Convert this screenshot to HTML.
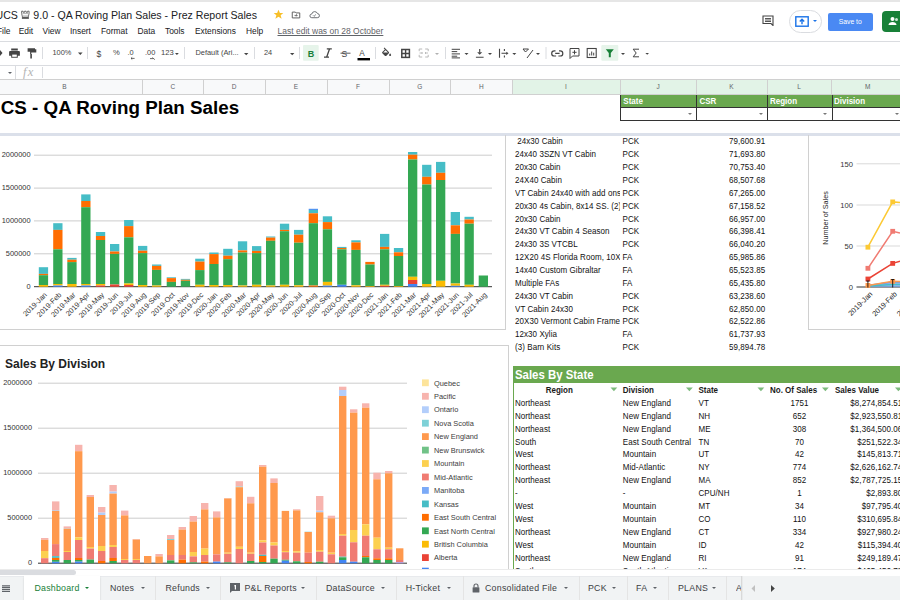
<!DOCTYPE html>
<html><head><meta charset="utf-8">
<style>
*{margin:0;padding:0;box-sizing:border-box}
html,body{width:900px;height:600px;overflow:hidden;background:#fff;font-family:"Liberation Sans",sans-serif;color:#202124}
.a{position:absolute;white-space:nowrap}
.c{position:absolute;white-space:nowrap;font-size:8px;letter-spacing:0.06px;line-height:12px;color:#111;transform:scaleY(1.2);transform-origin:0 6px}
.sy{transform:scaleY(1.2);transform-origin:0 6px}
.hl{position:absolute;background:#e2e3e3}
.col{position:absolute;top:79px;height:15.5px;font-size:6.5px;line-height:15px;text-align:center;color:#5f6368;border-right:1px solid #d0d0d0}
.tab{position:absolute;top:576px;height:24px;font-size:8.8px;letter-spacing:0.25px;line-height:24px;color:#3c4043}
.sep{position:absolute;top:576px;height:24px;width:1px;background:#e4e4e4}
.dd{position:absolute;width:0;height:0;border-left:2.3px solid transparent;border-right:2.3px solid transparent;border-top:2.5px solid #5f6368}
svg text{font-family:"Liberation Sans",sans-serif}
</style></head><body>
<!-- top line -->
<div class="a" style="left:0;top:0;width:900px;height:1.6px;background:#e6e6e6"></div>
<!-- title -->
<div class="a" style="left:-4.5px;top:8px;font-size:10.6px;line-height:14px;color:#202124">UCS</div>
<svg class="a" style="left:20px;top:10px" width="11" height="10" viewBox="20 10 11 10"><path d="M21.6 11.2h1.5v1.1h1.5v-1.1h1.5v1.1h1.5v-1.1h1.5v2.2l-.9 3.8h-5.7l-.9-3.8z" fill="none" stroke="#5a5a5a" stroke-width=".85"/><path d="M22.5 13.6h5.9" stroke="#7a7a7a" stroke-width=".6"/><rect x="21.9" y="17.2" width="7" height="1.6" fill="#4a4a4a"/><path d="M22.7 15.9h5.4" stroke="#9a9a9a" stroke-width=".7"/></svg>
<div class="a" style="left:33.3px;top:8px;font-size:10.6px;line-height:14px;color:#202124">9.0 - QA Roving Plan Sales - Prez Report Sales</div>
<svg class="a" style="left:272.6px;top:9px" width="11" height="11" viewBox="0 0 24 24"><path d="M12 1.5l3.1 7.1h7.4l-5.8 4.8 2.1 7.9L12 16.8l-6.8 4.5 2.1-7.9-5.8-4.8h7.4z" fill="#f7bf2a"/></svg>
<svg class="a" style="left:290.5px;top:9.5px" width="10" height="10" viewBox="0 0 24 24"><path d="M3 5h7l2 2h9v12H3z" fill="none" stroke="#555" stroke-width="2.2"/><path d="M8.5 13h6M12.5 10.5l2.5 2.5-2.5 2.5" fill="none" stroke="#555" stroke-width="2"/></svg>
<svg class="a" style="left:309px;top:10px" width="11" height="9" viewBox="0 0 24 18"><path d="M6 16h12a4.5 4.5 0 0 0 .5-9A6.5 6.5 0 0 0 6 8 4 4 0 0 0 6 16z" fill="none" stroke="#5f6368" stroke-width="2"/><path d="M9 11l2 2 4-4" fill="none" stroke="#5f6368" stroke-width="1.8"/></svg>
<!-- menu -->
<div class="a" style="left:-3px;top:24.5px;font-size:8.4px;line-height:12px;color:#202124;word-spacing:0">
<span style="position:absolute;left:0">File</span><span style="position:absolute;left:21.7px">Edit</span><span style="position:absolute;left:45.5px">View</span><span style="position:absolute;left:73px">Insert</span><span style="position:absolute;left:104px">Format</span><span style="position:absolute;left:140.5px">Data</span><span style="position:absolute;left:168px">Tools</span><span style="position:absolute;left:198px">Extensions</span><span style="position:absolute;left:249px">Help</span></div>
<div class="a" style="left:277.5px;top:24.5px;font-size:8.5px;line-height:12px;color:#5f6368;text-decoration:underline">Last edit was on 28 October</div>
<!-- right top -->
<svg class="a" style="left:761.5px;top:15px" width="12" height="11" viewBox="0 0 24 22"><path d="M2 2h20v19l-4-4H2z" fill="none" stroke="#444" stroke-width="2.2"/><path d="M6 7h12M6 10h12M6 13h12" stroke="#444" stroke-width="1.8"/></svg>
<div class="a" style="left:788.5px;top:10px;width:33px;height:22.5px;border:1px solid #dadce0;border-radius:12px;background:#fff"></div>
<svg class="a" style="left:795px;top:16px" width="14" height="11" viewBox="0 0 14 11"><rect x="0.8" y="0.8" width="12.4" height="9.4" fill="none" stroke="#1a73e8" stroke-width="1.4"/><path d="M7 8.2V3.5M4.8 5.6L7 3.3L9.2 5.6" fill="none" stroke="#1a73e8" stroke-width="1.4"/></svg>
<div class="dd" style="left:812.5px;top:20px;border-top-color:#1a73e8"></div>
<div class="a" style="left:828px;top:13px;width:44.5px;height:17.5px;background:#4a89f3;border-radius:2px;color:#fff;font-size:6.8px;line-height:17.5px;text-align:center">Save to</div>
<div class="a" style="left:882px;top:10.5px;width:30px;height:21.5px;background:#188038;border-radius:4px"></div>
<svg class="a" style="left:888px;top:16px" width="12" height="10" viewBox="0 0 24 20"><circle cx="9" cy="6" r="4" fill="#fff"/><path d="M1 18c0-4 4-6 8-6s8 2 8 6z" fill="#fff"/><circle cx="17" cy="7" r="3" fill="#cfe6d6"/></svg>
<!-- toolbar -->
<div class="a" style="left:0;top:41px;width:900px;height:1px;background:#dadce0"></div>
<div class="a" style="left:0;top:64.5px;width:900px;height:1px;background:#dadce0"></div>
<svg class="a" style="left:0;top:42px" width="900" height="22" viewBox="0 42 900 22">
<g fill="#444" stroke="none">
<path d="M0 50l2.5 3-2.5 3z"/>
<!-- print -->
<path d="M11.2 48.6h6.6v2h-6.6z M10 51h9a.9.9 0 0 1 .9.9v3.9h-2.1v2h-6.6v-2H9.1v-3.9a.9.9 0 0 1 .9-.9z" />
<rect x="12.2" y="54.6" width="4.6" height="2.2" fill="#fff"/>
<!-- paint format -->
<path d="M27.6 48.2h7.4v3.6h-7.4z M35 49.2h1.3v3.4h-5v1.4h-1.2v-2.5h4.9z M30.3 54h1.6v4.6h-1.6z"/>
</g>
<g stroke="#dadce0" stroke-width="1"><line x1="42.5" y1="47" x2="42.5" y2="59"/><line x1="87.5" y1="47" x2="87.5" y2="59"/><line x1="184.5" y1="47" x2="184.5" y2="59"/><line x1="254.5" y1="47" x2="254.5" y2="59"/><line x1="299.5" y1="47" x2="299.5" y2="59"/><line x1="375.5" y1="47" x2="375.5" y2="59"/><line x1="445.5" y1="47" x2="445.5" y2="59"/><line x1="546" y1="47" x2="546" y2="59"/></g>
<g font-family="Liberation Sans" font-size="7.4" fill="#444">
<text x="52.5" y="55">100%</text>
<text x="96.6" y="56.6" font-size="8.6">$</text>
<text x="113" y="55.4" font-size="7.6">%</text>
<text x="127.5" y="55.4" font-size="7.4">.0</text>
<text x="145" y="55.4" font-size="7.4">.00</text>
<text x="161" y="55.4" font-size="7.6">123</text>
<text x="195.5" y="55.3" font-size="7.4">Default (Ari...</text>
<text x="264" y="55" font-size="7.4">24</text>
</g>
<g fill="#444">
<path d="M78 52.5h4.6l-2.3 2.5z"/><path d="M175 53h3.8l-1.9 2z"/><path d="M244 53h4.4l-2.2 2.3z"/><path d="M290 53h4.4l-2.2 2.3z"/>
<path d="M131 58.4h3.6M131 58.4l1.2-1M131 58.4l1.2 1" stroke="#444" stroke-width="0.8" fill="none"/>
<path d="M150 58.6h3.6M153.6 58.6l-1.2-1M153.6 58.6l1.2 1" stroke="#444" stroke-width="0.8" fill="none"/>
</g>
<rect x="303" y="45" width="15.7" height="15.8" fill="#e6f4ea" rx="1"/>
<text x="307.8" y="56.6" font-family="Liberation Sans" font-weight="bold" font-size="9" fill="#188038">B</text>
<path d="M326.8 48.8h5M324 57.2h5M329.6 48.8l-3 8.4" stroke="#444" stroke-width="1.3" fill="none"/>
<text x="341.4" y="56.6" font-family="Liberation Sans" font-size="8.6" fill="#444">S</text>
<line x1="340.5" y1="53.2" x2="350.5" y2="53.2" stroke="#444" stroke-width="0.9"/>
<text x="359.3" y="55.5" font-family="Liberation Sans" font-size="8.2" fill="#444">A</text>
<rect x="357.5" y="58" width="12.5" height="2.4" fill="#000"/>
<!-- fill bucket -->
<g transform="translate(380.6,47.6) scale(0.5)"><path d="M16.56 8.94L7.62 0 6.21 1.41l2.38 2.38-5.15 5.15c-.59.59-.59 1.54 0 2.12l5.5 5.5c.29.29.68.44 1.06.44s.77-.15 1.06-.44l5.5-5.5c.59-.58.59-1.53 0-2.12zM5.21 10L10 5.21 14.790 10H5.21zM19 11.5s-2 2.170-2 3.5c0 1.1.9 2 2 2s2-.9 2-2c0-1.33-2-3.5-2-3.5z" fill="#444"/></g>
<!-- borders -->
<rect x="401.8" y="49.5" width="7.6" height="7.9" fill="none" stroke="#444" stroke-width="1.5"/><path d="M405.6 49.5v7.9M401.8 53.45h7.6" stroke="#444" stroke-width="1.4"/>
<!-- merge -->
<path d="M419.2 51.2v-2.2h3M425.2 49h3v2.2M419.2 54.8v2.2h3M425.2 57h3v-2.2" fill="none" stroke="#b8b8b8" stroke-width="1"/><path d="M419.5 53h3M421.5 52l1 1-1 1M428 53h-3M426 52l-1 1 1 1" fill="none" stroke="#b8b8b8" stroke-width=".9"/>
<path d="M435 53h4l-2 2z" fill="#b0b0b0"/>
<!-- align -->
<path d="M451.7 49.3h8.3M451.7 51.6h5.5M451.7 53.9h8.3M451.7 56.2h5.5M451.7 57.9h8.3" stroke="#444" stroke-width="1"/>
<path d="M464.5 53h4l-2 2z" fill="#444"/>
<path d="M479.7 49v3.6M475.9 57.2h7.7" stroke="#444" stroke-width="1.1" fill="none"/><path d="M477.2 52.2h5l-2.5 2.6z" fill="#444"/>
<path d="M488 53h4l-2 2z" fill="#444"/>
<path d="M499.5 48.8v9M501.5 53.3h5.5M504.4 49v2M504.4 55.5v2" stroke="#444" stroke-width="1.1" fill="none"/><path d="M506.3 51.7l2.2 1.6-2.2 1.6z" fill="#444"/>
<path d="M512.3 53h4l-2 2z" fill="#444"/>
<path d="M523 49h5.5l-3 3z M527 58l6-8" stroke="#444" stroke-width="1" fill="none"/>
<path d="M536 53h4l-2 2z" fill="#444"/>
<!-- link -->
<path d="M555.5 50.8h-1.2a2.6 2.6 0 0 0 0 5.2h1.8M559 50.8h1.2a2.6 2.6 0 0 1 0 5.2h-1.8M555.2 53.4h4.4" stroke="#444" stroke-width="1.2" fill="none"/>
<!-- comment -->
<path d="M570 48.5h9v7.5h-6.5l-2.5 2.5z" fill="none" stroke="#444" stroke-width="1"/><path d="M574.5 50.2v4.2M572.4 52.3h4.2" stroke="#444" stroke-width="1"/>
<!-- chart -->
<rect x="587.2" y="48.5" width="9" height="9" fill="none" stroke="#444" stroke-width="1.1"/><path d="M589.7 55.5v-2M591.7 55.5v-4M593.7 55.5v-2.8" stroke="#444" stroke-width="1"/>
<!-- filter -->
<rect x="601.3" y="45" width="17" height="15.8" fill="#e6f4ea" rx="1"/>
<path d="M605.8 49.2h8l-3 3.8v4.2h-2v-4.2z" fill="#188038"/>
<path d="M621 53h4l-2 2z" fill="#444"/>
<!-- sigma -->
<path d="M639 49.2h-5.8l3 3.8-3 3.8h5.8" stroke="#444" stroke-width="1" fill="none"/>
<path d="M645.4 53h3.6l-1.8 1.8z" fill="#444"/>
</svg>
<!-- formula bar -->
<div class="dd" style="left:8px;top:72px"></div>
<div class="a" style="left:15px;top:66px;width:1px;height:12.5px;background:#dadce0"></div>
<div class="a" style="left:23px;top:64.5px;font-family:'Liberation Serif';font-style:italic;font-size:12.5px;letter-spacing:1.2px;line-height:15px;color:#b4b4b4">fx</div>
<div class="a" style="left:42px;top:67px;width:1px;height:11px;background:#dadce0"></div>
<!-- column header -->
<div class="a" style="left:0;top:79px;width:900px;height:15.5px;background:#f8f9fa;border-top:1px solid #d0d0d0;border-bottom:1px solid #d0d0d0"></div>
<div class="a" style="left:512.3px;top:80px;width:388px;height:14px;background:#e2f3e7"></div>
<div class="col" style="left:-13px;width:156px">B</div>
<div class="col" style="left:143px;width:60.5px">C</div>
<div class="col" style="left:203.5px;width:62px">D</div>
<div class="col" style="left:265.5px;width:62px">E</div>
<div class="col" style="left:327.5px;width:62px">F</div>
<div class="col" style="left:389.5px;width:61.5px">G</div>
<div class="col" style="left:451px;width:61.5px">H</div>
<div class="col" style="left:512.5px;width:108px">I</div>
<div class="col" style="left:620.5px;width:76px">J</div>
<div class="col" style="left:696.5px;width:71px">K</div>
<div class="col" style="left:767.5px;width:64px">L</div>
<div class="col" style="left:831.5px;width:73.5px">M</div>
<!-- big title -->
<div class="a" style="left:0.8px;top:96.3px;font-size:18.8px;line-height:24px;font-weight:bold;color:#000">CS - QA Roving Plan Sales</div>
<!-- filter header cells -->
<div class="a" style="left:620px;top:94.5px;width:290px;height:13px;background:#6aa84f;border-bottom:1px solid #333"></div>
<div class="a" style="left:620px;top:107.5px;width:290px;height:13px;background:#fff;border:1px solid #333;border-top:none"></div>
<div class="a" style="left:696px;top:94.5px;width:1px;height:26px;background:#333"></div>
<div class="a" style="left:767px;top:94.5px;width:1px;height:26px;background:#333"></div>
<div class="a" style="left:831.5px;top:94.5px;width:1px;height:26px;background:#333"></div>
<div class="a" style="left:620px;top:94.5px;width:1px;height:26px;background:#333"></div>
<div class="a" style="left:623.3px;top:95.8px;font-size:8px;line-height:12.5px;font-weight:bold;color:#fff;transform:scaleY(1.15);transform-origin:0 6px">State</div>
<div class="a" style="left:699.5px;top:95.8px;font-size:8px;line-height:12.5px;font-weight:bold;color:#fff;transform:scaleY(1.15);transform-origin:0 6px">CSR</div>
<div class="a" style="left:770px;top:95.8px;font-size:8px;line-height:12.5px;font-weight:bold;color:#fff;transform:scaleY(1.15);transform-origin:0 6px">Region</div>
<div class="a" style="left:834px;top:95.8px;font-size:8px;line-height:12.5px;font-weight:bold;color:#fff;transform:scaleY(1.15);transform-origin:0 6px">Division</div>
<div class="dd" style="left:687.8px;top:112.8px;border-top-color:#777"></div>
<div class="dd" style="left:759px;top:112.8px;border-top-color:#777"></div>
<div class="dd" style="left:823px;top:112.8px;border-top-color:#777"></div>
<div class="dd" style="left:895px;top:112.8px;border-top-color:#777"></div>
<!-- frozen divider -->
<div class="a" style="left:0;top:133px;width:900px;height:3px;background:#dbe0ea"></div>
<!-- chart 1 -->
<div class="a" style="left:-1px;top:135px;width:507px;height:195px;border-right:1px solid #d0d0d0;border-bottom:1px solid #d0d0d0"></div>
<svg class="a" style="left:0;top:0" width="900" height="600"><g fill="#333"><line x1="34" y1="155.2" x2="492" y2="155.2" stroke="#cccccc" stroke-width="1"/><text x="30.5" y="157.4" text-anchor="end" font-size="7.4">2000000</text><line x1="34" y1="188.1" x2="492" y2="188.1" stroke="#cccccc" stroke-width="1"/><text x="30.5" y="190.3" text-anchor="end" font-size="7.4">1500000</text><line x1="34" y1="220.9" x2="492" y2="220.9" stroke="#cccccc" stroke-width="1"/><text x="30.5" y="223.1" text-anchor="end" font-size="7.4">1000000</text><line x1="34" y1="253.8" x2="492" y2="253.8" stroke="#cccccc" stroke-width="1"/><text x="30.5" y="256.0" text-anchor="end" font-size="7.4">500000</text><line x1="34" y1="286.7" x2="492" y2="286.7" stroke="#333" stroke-width="1"/><text x="30.5" y="288.9" text-anchor="end" font-size="7.4">0</text><rect x="38.8" y="267.2" width="9.3" height="6.7" fill="#46bdc6"/><rect x="38.8" y="273.9" width="9.3" height="1.3" fill="#ff6d01"/><rect x="38.8" y="275.2" width="9.3" height="9.8" fill="#34a853"/><rect x="38.8" y="285.0" width="9.3" height="1.7" fill="#fbbc04"/><text transform="translate(47.4,295.3) rotate(-45)" text-anchor="end" font-size="7.3">2019-Jan</text><rect x="53.2" y="223.2" width="9.3" height="6.7" fill="#46bdc6"/><rect x="53.2" y="229.9" width="9.3" height="19.4" fill="#ff6d01"/><rect x="53.2" y="249.3" width="9.3" height="34.7" fill="#34a853"/><rect x="53.2" y="284.0" width="9.3" height="1.5" fill="#fbbc04"/><rect x="53.2" y="285.5" width="9.3" height="1.2" fill="#4285f4"/><text transform="translate(61.9,295.3) rotate(-45)" text-anchor="end" font-size="7.3">2019-Feb</text><rect x="67.3" y="257.9" width="9.3" height="1.8" fill="#46bdc6"/><rect x="67.3" y="259.7" width="9.3" height="2.4" fill="#ff6d01"/><rect x="67.3" y="262.1" width="9.3" height="21.9" fill="#34a853"/><rect x="67.3" y="284.0" width="9.3" height="2.7" fill="#fbbc04"/><text transform="translate(76.0,295.3) rotate(-45)" text-anchor="end" font-size="7.3">2019-Mar</text><rect x="81.2" y="194.4" width="9.3" height="6.6" fill="#46bdc6"/><rect x="81.2" y="201.0" width="9.3" height="6.2" fill="#ff6d01"/><rect x="81.2" y="207.2" width="9.3" height="76.8" fill="#34a853"/><rect x="81.2" y="284.0" width="9.3" height="1.5" fill="#fbbc04"/><rect x="81.2" y="285.5" width="9.3" height="1.2" fill="#4285f4"/><text transform="translate(89.9,295.3) rotate(-45)" text-anchor="end" font-size="7.3">2019-Apr</text><rect x="95.9" y="232.0" width="9.3" height="4.0" fill="#46bdc6"/><rect x="95.9" y="236.0" width="9.3" height="4.0" fill="#ff6d01"/><rect x="95.9" y="240.0" width="9.3" height="44.0" fill="#34a853"/><rect x="95.9" y="284.0" width="9.3" height="1.5" fill="#fbbc04"/><rect x="95.9" y="285.5" width="9.3" height="1.2" fill="#ea4335"/><text transform="translate(104.6,295.3) rotate(-45)" text-anchor="end" font-size="7.3">2019-May</text><rect x="110.0" y="244.0" width="9.3" height="7.5" fill="#46bdc6"/><rect x="110.0" y="251.5" width="9.3" height="2.4" fill="#ff6d01"/><rect x="110.0" y="253.9" width="9.3" height="30.6" fill="#34a853"/><rect x="110.0" y="284.5" width="9.3" height="2.2" fill="#ea4335"/><text transform="translate(118.7,295.3) rotate(-45)" text-anchor="end" font-size="7.3">2019-Jun</text><rect x="124.1" y="220.0" width="9.3" height="6.1" fill="#46bdc6"/><rect x="124.1" y="226.1" width="9.3" height="11.2" fill="#ff6d01"/><rect x="124.1" y="237.3" width="9.3" height="46.2" fill="#34a853"/><rect x="124.1" y="283.5" width="9.3" height="1.5" fill="#fbbc04"/><rect x="124.1" y="285.0" width="9.3" height="1.7" fill="#ea4335"/><text transform="translate(132.8,295.3) rotate(-45)" text-anchor="end" font-size="7.3">2019-Jul</text><rect x="138.0" y="245.9" width="9.3" height="4.8" fill="#46bdc6"/><rect x="138.0" y="250.7" width="9.3" height="2.4" fill="#ff6d01"/><rect x="138.0" y="253.1" width="9.3" height="31.9" fill="#34a853"/><rect x="138.0" y="285.0" width="9.3" height="1.7" fill="#fbbc04"/><text transform="translate(146.7,295.3) rotate(-45)" text-anchor="end" font-size="7.3">2019-Aug</text><rect x="152.0" y="264.5" width="9.3" height="1.4" fill="#46bdc6"/><rect x="152.0" y="265.9" width="9.3" height="4.0" fill="#ff6d01"/><rect x="152.0" y="269.9" width="9.3" height="15.6" fill="#34a853"/><rect x="152.0" y="285.5" width="9.3" height="1.2" fill="#fbbc04"/><text transform="translate(160.7,295.3) rotate(-45)" text-anchor="end" font-size="7.3">2019-Sep</text><rect x="166.7" y="277.3" width="9.3" height="0.8" fill="#46bdc6"/><rect x="166.7" y="278.1" width="9.3" height="3.8" fill="#ff6d01"/><rect x="166.7" y="281.9" width="9.3" height="4.8" fill="#34a853"/><text transform="translate(175.3,295.3) rotate(-45)" text-anchor="end" font-size="7.3">2019-Oct</text><rect x="180.8" y="278.9" width="9.3" height="0.9" fill="#46bdc6"/><rect x="180.8" y="279.8" width="9.3" height="1.0" fill="#ff6d01"/><rect x="180.8" y="280.8" width="9.3" height="5.9" fill="#34a853"/><text transform="translate(189.5,295.3) rotate(-45)" text-anchor="end" font-size="7.3">2019-Nov</text><rect x="195.2" y="258.7" width="9.3" height="2.9" fill="#46bdc6"/><rect x="195.2" y="261.6" width="9.3" height="8.5" fill="#ff6d01"/><rect x="195.2" y="270.1" width="9.3" height="14.7" fill="#34a853"/><rect x="195.2" y="284.8" width="9.3" height="1.9" fill="#fbbc04"/><text transform="translate(203.8,295.3) rotate(-45)" text-anchor="end" font-size="7.3">2019-Dec</text><rect x="209.3" y="252.5" width="9.3" height="1.6" fill="#46bdc6"/><rect x="209.3" y="254.1" width="9.3" height="9.9" fill="#ff6d01"/><rect x="209.3" y="264.0" width="9.3" height="21.0" fill="#34a853"/><rect x="209.3" y="285.0" width="9.3" height="1.7" fill="#fbbc04"/><text transform="translate(218.0,295.3) rotate(-45)" text-anchor="end" font-size="7.3">2020-Jan</text><rect x="223.2" y="248.8" width="9.3" height="6.9" fill="#46bdc6"/><rect x="223.2" y="255.7" width="9.3" height="3.5" fill="#ff6d01"/><rect x="223.2" y="259.2" width="9.3" height="25.8" fill="#34a853"/><rect x="223.2" y="285.0" width="9.3" height="1.7" fill="#fbbc04"/><text transform="translate(231.8,295.3) rotate(-45)" text-anchor="end" font-size="7.3">2020-Feb</text><rect x="237.9" y="241.3" width="9.3" height="9.1" fill="#46bdc6"/><rect x="237.9" y="250.4" width="9.3" height="2.1" fill="#ff6d01"/><rect x="237.9" y="252.5" width="9.3" height="33.0" fill="#34a853"/><rect x="237.9" y="285.5" width="9.3" height="1.2" fill="#fbbc04"/><text transform="translate(246.6,295.3) rotate(-45)" text-anchor="end" font-size="7.3">2020-Mar</text><rect x="252.0" y="246.1" width="9.3" height="4.8" fill="#46bdc6"/><rect x="252.0" y="250.9" width="9.3" height="2.2" fill="#ff6d01"/><rect x="252.0" y="253.1" width="9.3" height="31.7" fill="#34a853"/><rect x="252.0" y="284.8" width="9.3" height="1.9" fill="#fbbc04"/><text transform="translate(260.6,295.3) rotate(-45)" text-anchor="end" font-size="7.3">2020-Apr</text><rect x="266.0" y="236.5" width="9.3" height="1.1" fill="#46bdc6"/><rect x="266.0" y="237.6" width="9.3" height="3.2" fill="#ff6d01"/><rect x="266.0" y="240.8" width="9.3" height="44.7" fill="#34a853"/><rect x="266.0" y="285.5" width="9.3" height="1.2" fill="#fbbc04"/><text transform="translate(274.6,295.3) rotate(-45)" text-anchor="end" font-size="7.3">2020-May</text><rect x="279.9" y="223.7" width="9.3" height="6.2" fill="#46bdc6"/><rect x="279.9" y="229.9" width="9.3" height="1.3" fill="#ff6d01"/><rect x="279.9" y="231.2" width="9.3" height="53.6" fill="#34a853"/><rect x="279.9" y="284.8" width="9.3" height="1.9" fill="#fbbc04"/><text transform="translate(288.5,295.3) rotate(-45)" text-anchor="end" font-size="7.3">2020-Jun</text><rect x="294.0" y="229.9" width="9.3" height="4.8" fill="#46bdc6"/><rect x="294.0" y="234.7" width="9.3" height="8.0" fill="#ff6d01"/><rect x="294.0" y="242.7" width="9.3" height="42.6" fill="#34a853"/><rect x="294.0" y="285.3" width="9.3" height="1.4" fill="#fbbc04"/><text transform="translate(302.6,295.3) rotate(-45)" text-anchor="end" font-size="7.3">2020-Jul</text><rect x="308.7" y="208.8" width="9.3" height="1.1" fill="#4285f4"/><rect x="308.7" y="209.9" width="9.3" height="3.4" fill="#46bdc6"/><rect x="308.7" y="213.3" width="9.3" height="9.9" fill="#ff6d01"/><rect x="308.7" y="223.2" width="9.3" height="62.3" fill="#34a853"/><rect x="308.7" y="285.5" width="9.3" height="1.2" fill="#ff6d01"/><text transform="translate(317.3,295.3) rotate(-45)" text-anchor="end" font-size="7.3">2020-Aug</text><rect x="322.8" y="216.3" width="9.3" height="5.8" fill="#46bdc6"/><rect x="322.8" y="222.1" width="9.3" height="7.2" fill="#ff6d01"/><rect x="322.8" y="229.3" width="9.3" height="52.6" fill="#34a853"/><rect x="322.8" y="281.9" width="9.3" height="3.7" fill="#fbbc04"/><rect x="322.8" y="285.6" width="9.3" height="1.1" fill="#4285f4"/><text transform="translate(331.4,295.3) rotate(-45)" text-anchor="end" font-size="7.3">2020-Sep</text><rect x="337.2" y="246.9" width="9.3" height="1.1" fill="#46bdc6"/><rect x="337.2" y="248.0" width="9.3" height="1.3" fill="#ff6d01"/><rect x="337.2" y="249.3" width="9.3" height="35.5" fill="#34a853"/><rect x="337.2" y="284.8" width="9.3" height="1.9" fill="#4285f4"/><text transform="translate(345.8,295.3) rotate(-45)" text-anchor="end" font-size="7.3">2020-Oct</text><rect x="351.3" y="240.3" width="9.3" height="2.1" fill="#46bdc6"/><rect x="351.3" y="242.4" width="9.3" height="7.5" fill="#ff6d01"/><rect x="351.3" y="249.9" width="9.3" height="35.4" fill="#34a853"/><rect x="351.3" y="285.3" width="9.3" height="1.4" fill="#fbbc04"/><text transform="translate(359.9,295.3) rotate(-45)" text-anchor="end" font-size="7.3">2020-Nov</text><rect x="365.3" y="261.9" width="9.3" height="2.6" fill="#ff6d01"/><rect x="365.3" y="264.5" width="9.3" height="21.5" fill="#34a853"/><rect x="365.3" y="286.0" width="9.3" height="0.7" fill="#fbbc04"/><text transform="translate(373.9,295.3) rotate(-45)" text-anchor="end" font-size="7.3">2020-Dec</text><rect x="380.0" y="233.9" width="9.3" height="13.0" fill="#46bdc6"/><rect x="380.0" y="246.9" width="9.3" height="2.4" fill="#ff6d01"/><rect x="380.0" y="249.3" width="9.3" height="35.5" fill="#34a853"/><rect x="380.0" y="284.8" width="9.3" height="1.0" fill="#fbbc04"/><rect x="380.0" y="285.8" width="9.3" height="0.9" fill="#ea4335"/><text transform="translate(388.6,295.3) rotate(-45)" text-anchor="end" font-size="7.3">2021-Jan</text><rect x="393.9" y="248.0" width="9.3" height="4.3" fill="#46bdc6"/><rect x="393.9" y="252.3" width="9.3" height="3.7" fill="#ff6d01"/><rect x="393.9" y="256.0" width="9.3" height="30.0" fill="#34a853"/><rect x="393.9" y="286.0" width="9.3" height="0.7" fill="#fbbc04"/><text transform="translate(402.5,295.3) rotate(-45)" text-anchor="end" font-size="7.3">2021-Feb</text><rect x="408.0" y="152.0" width="9.3" height="2.7" fill="#46bdc6"/><rect x="408.0" y="154.7" width="9.3" height="4.8" fill="#ff6d01"/><rect x="408.0" y="159.5" width="9.3" height="117.3" fill="#34a853"/><rect x="408.0" y="276.8" width="9.3" height="3.2" fill="#fbbc04"/><rect x="408.0" y="280.0" width="9.3" height="4.0" fill="#ea4335"/><rect x="408.0" y="284.0" width="9.3" height="2.7" fill="#4285f4"/><text transform="translate(416.6,295.3) rotate(-45)" text-anchor="end" font-size="7.3">2021-Mar</text><rect x="422.1" y="164.8" width="9.3" height="12.0" fill="#46bdc6"/><rect x="422.1" y="176.8" width="9.3" height="7.7" fill="#ff6d01"/><rect x="422.1" y="184.5" width="9.3" height="99.5" fill="#34a853"/><rect x="422.1" y="284.0" width="9.3" height="2.7" fill="#fbbc04"/><text transform="translate(430.8,295.3) rotate(-45)" text-anchor="end" font-size="7.3">2021-Apr</text><rect x="436.0" y="161.9" width="9.3" height="10.9" fill="#46bdc6"/><rect x="436.0" y="172.8" width="9.3" height="7.2" fill="#ff6d01"/><rect x="436.0" y="180.0" width="9.3" height="100.8" fill="#34a853"/><rect x="436.0" y="280.8" width="9.3" height="5.9" fill="#fbbc04"/><text transform="translate(444.6,295.3) rotate(-45)" text-anchor="end" font-size="7.3">2021-May</text><rect x="450.7" y="212.0" width="9.3" height="13.3" fill="#46bdc6"/><rect x="450.7" y="225.3" width="9.3" height="8.6" fill="#ff6d01"/><rect x="450.7" y="233.9" width="9.3" height="49.6" fill="#34a853"/><rect x="450.7" y="283.5" width="9.3" height="2.3" fill="#fbbc04"/><rect x="450.7" y="285.8" width="9.3" height="0.9" fill="#4285f4"/><text transform="translate(459.3,295.3) rotate(-45)" text-anchor="end" font-size="7.3">2021-Jun</text><rect x="464.5" y="216.8" width="9.3" height="2.7" fill="#46bdc6"/><rect x="464.5" y="219.5" width="9.3" height="4.2" fill="#ff6d01"/><rect x="464.5" y="223.7" width="9.3" height="61.1" fill="#34a853"/><rect x="464.5" y="284.8" width="9.3" height="1.9" fill="#fbbc04"/><text transform="translate(473.1,295.3) rotate(-45)" text-anchor="end" font-size="7.3">2021-Jul</text><rect x="478.7" y="275.5" width="9.3" height="11.2" fill="#34a853"/><text transform="translate(487.3,295.3) rotate(-45)" text-anchor="end" font-size="7.3">2021-Aug</text></g></svg>
<!-- table 1 -->
<div class="c" style="left:515px;top:136.4px;width:104.8px;overflow:hidden">&nbsp;24x30 Cabin</div><div class="c" style="left:622.5px;top:136.4px">PCK</div><div class="c" style="left:700px;top:136.4px;width:65.2px;text-align:right">79,600.91</div><div class="c" style="left:515px;top:149.3px;width:104.8px;overflow:hidden">24x40 3SZN VT Cabin</div><div class="c" style="left:622.5px;top:149.3px">PCK</div><div class="c" style="left:700px;top:149.3px;width:65.2px;text-align:right">71,693.80</div><div class="c" style="left:515px;top:162.1px;width:104.8px;overflow:hidden">20x30 Cabin</div><div class="c" style="left:622.5px;top:162.1px">PCK</div><div class="c" style="left:700px;top:162.1px;width:65.2px;text-align:right">70,753.40</div><div class="c" style="left:515px;top:175.0px;width:104.8px;overflow:hidden">24X40 Cabin</div><div class="c" style="left:622.5px;top:175.0px">PCK</div><div class="c" style="left:700px;top:175.0px;width:65.2px;text-align:right">68,507.68</div><div class="c" style="left:515px;top:187.8px;width:104.8px;overflow:hidden">VT Cabin 24x40 with add ons</div><div class="c" style="left:622.5px;top:187.8px">PCK</div><div class="c" style="left:700px;top:187.8px;width:65.2px;text-align:right">67,265.00</div><div class="c" style="left:515px;top:200.7px;width:104.8px;overflow:hidden">20x30 4s Cabin, 8x14 SS. (2)</div><div class="c" style="left:622.5px;top:200.7px">PCK</div><div class="c" style="left:700px;top:200.7px;width:65.2px;text-align:right">67,158.52</div><div class="c" style="left:515px;top:213.6px;width:104.8px;overflow:hidden">20x30 Cabin</div><div class="c" style="left:622.5px;top:213.6px">PCK</div><div class="c" style="left:700px;top:213.6px;width:65.2px;text-align:right">66,957.00</div><div class="c" style="left:515px;top:226.4px;width:104.8px;overflow:hidden">24x30 VT Cabin 4 Season</div><div class="c" style="left:622.5px;top:226.4px">PCK</div><div class="c" style="left:700px;top:226.4px;width:65.2px;text-align:right">66,398.41</div><div class="c" style="left:515px;top:239.3px;width:104.8px;overflow:hidden">24x30 3S VTCBL</div><div class="c" style="left:622.5px;top:239.3px">PCK</div><div class="c" style="left:700px;top:239.3px;width:65.2px;text-align:right">66,040.20</div><div class="c" style="left:515px;top:252.1px;width:104.8px;overflow:hidden">12X20 4S Florida Room, 10X</div><div class="c" style="left:622.5px;top:252.1px">FA</div><div class="c" style="left:700px;top:252.1px;width:65.2px;text-align:right">65,985.86</div><div class="c" style="left:515px;top:265.0px;width:104.8px;overflow:hidden">14x40 Custom Gibraltar</div><div class="c" style="left:622.5px;top:265.0px">FA</div><div class="c" style="left:700px;top:265.0px;width:65.2px;text-align:right">65,523.85</div><div class="c" style="left:515px;top:277.9px;width:104.8px;overflow:hidden">Multiple FAs</div><div class="c" style="left:622.5px;top:277.9px">FA</div><div class="c" style="left:700px;top:277.9px;width:65.2px;text-align:right">65,435.80</div><div class="c" style="left:515px;top:290.7px;width:104.8px;overflow:hidden">24x30 VT Cabin</div><div class="c" style="left:622.5px;top:290.7px">PCK</div><div class="c" style="left:700px;top:290.7px;width:65.2px;text-align:right">63,238.60</div><div class="c" style="left:515px;top:303.6px;width:104.8px;overflow:hidden">VT Cabin 24x30</div><div class="c" style="left:622.5px;top:303.6px">PCK</div><div class="c" style="left:700px;top:303.6px;width:65.2px;text-align:right">62,850.00</div><div class="c" style="left:515px;top:316.4px;width:104.8px;overflow:hidden">20X30 Vermont Cabin Frame</div><div class="c" style="left:622.5px;top:316.4px">PCK</div><div class="c" style="left:700px;top:316.4px;width:65.2px;text-align:right">62,522.86</div><div class="c" style="left:515px;top:329.3px;width:104.8px;overflow:hidden">12x30 Xylia</div><div class="c" style="left:622.5px;top:329.3px">FA</div><div class="c" style="left:700px;top:329.3px;width:65.2px;text-align:right">61,737.93</div><div class="c" style="left:515px;top:342.2px;width:104.8px;overflow:hidden">(3) Barn Kits</div><div class="c" style="left:622.5px;top:342.2px">PCK</div><div class="c" style="left:700px;top:342.2px;width:65.2px;text-align:right">59,894.78</div>
<!-- line chart -->
<div class="a" style="left:808px;top:135px;width:100px;height:195px;border-left:1px solid #d0d0d0;border-bottom:1px solid #d0d0d0"></div>
<svg class="a" style="left:0;top:0" width="900" height="600" fill="#222">
<g stroke="#d9d9d9" stroke-width="1"><line x1="856.5" y1="163.8" x2="900" y2="163.8"/><line x1="856.5" y1="205" x2="900" y2="205"/><line x1="856.5" y1="246" x2="900" y2="246"/></g>
<line x1="856.5" y1="287" x2="900" y2="287" stroke="#333" stroke-width="1"/>
<g font-size="7.6" text-anchor="end" fill="#333"><text x="853" y="166.5">150</text><text x="853" y="207.7">100</text><text x="853" y="248.7">50</text><text x="853" y="289.7">0</text></g>
<text transform="translate(828,218) rotate(-90)" text-anchor="middle" font-size="7.2">Number of Sales</text>
<polyline points="867.9,285.5 892.7,282 900,282" fill="none" stroke="#4285f4" stroke-width="1.4"/>
<polygon points="867.9,287 867.9,285.5 892.7,281.5 900,281.5 900,287" fill="#6d9eeb" opacity="0.7"/>
<polyline points="867.9,286 892.7,284.5 900,284.5" fill="none" stroke="#46bdc6" stroke-width="1.4"/>
<polyline points="867.9,285.4 892.7,281.2 900,281.5" fill="none" stroke="#ff994d" stroke-width="1.5"/>
<polyline points="867.9,279 892.7,263.4 900,261.2" fill="none" stroke="#ea4335" stroke-width="1.5"/>
<polyline points="867.9,268.3 892.7,231.3 900,233.1" fill="none" stroke="#f07b72" stroke-width="1.5"/>
<polyline points="867.9,247.2 892.7,201.9 900,202.5" fill="none" stroke="#fcc934" stroke-width="1.5"/>
<g><rect x="865.5" y="244.8" width="4.8" height="4.8" fill="#fcc934"/><rect x="890.3" y="199.5" width="4.8" height="4.8" fill="#fcc934"/>
<rect x="865.5" y="265.9" width="4.8" height="4.8" fill="#f07b72"/><rect x="890.3" y="228.9" width="4.8" height="4.8" fill="#f07b72"/>
<rect x="865.5" y="276.6" width="4.8" height="4.8" fill="#ea4335"/><rect x="890.3" y="261" width="4.8" height="4.8" fill="#ea4335"/>
<rect x="865.5" y="283" width="4.8" height="4.8" fill="#ff994d"/><rect x="890.3" y="279" width="4.8" height="4.8" fill="#ff994d"/></g>
<path d="M867.9 281v6.5M866.4 281h3M892.7 279.5v8M891.2 279.5h3" stroke="#111" stroke-width="0.9"/>
<text transform="translate(873,294.5) rotate(-45)" text-anchor="end" font-size="7.4">2019-Jan</text>
<text transform="translate(897.5,294.5) rotate(-45)" text-anchor="end" font-size="7.4">2019-Feb</text>
<text transform="translate(922,294.5) rotate(-45)" text-anchor="end" font-size="7.4">2019-Mar</text>
</svg>
<!-- chart 2 -->
<div class="a" style="left:-1px;top:345px;width:510px;height:240px;border-top:1px solid #d0d0d0;border-right:1px solid #d0d0d0"></div>
<div class="a" style="left:5px;top:356px;font-size:12px;line-height:16px;font-weight:bold;color:#222">Sales By Division</div>
<svg class="a" style="left:0;top:0" width="900" height="600"><g fill="#333"><line x1="38" y1="383.2" x2="407" y2="383.2" stroke="#cccccc" stroke-width="1"/><text x="32" y="385.4" text-anchor="end" font-size="7.4">2000000</text><line x1="38" y1="428.2" x2="407" y2="428.2" stroke="#cccccc" stroke-width="1"/><text x="32" y="430.4" text-anchor="end" font-size="7.4">1500000</text><line x1="38" y1="473.2" x2="407" y2="473.2" stroke="#cccccc" stroke-width="1"/><text x="32" y="475.4" text-anchor="end" font-size="7.4">1000000</text><line x1="38" y1="518.2" x2="407" y2="518.2" stroke="#cccccc" stroke-width="1"/><text x="32" y="520.4" text-anchor="end" font-size="7.4">500000</text><line x1="38" y1="563.2" x2="407" y2="563.2" stroke="#333" stroke-width="1"/><text x="32" y="565.4" text-anchor="end" font-size="7.4">0</text><rect x="41.0" y="538.0" width="7.4" height="1.8" fill="#f7b4ae"/><rect x="41.0" y="539.8" width="7.4" height="11.2" fill="#ff994d"/><rect x="41.0" y="551.0" width="7.4" height="7.2" fill="#fcd04f"/><rect x="41.0" y="558.2" width="7.4" height="5.1" fill="#f07b72"/><rect x="52.0" y="501.4" width="7.4" height="8.6" fill="#f7b4ae"/><rect x="52.0" y="510.0" width="7.4" height="0.8" fill="#b3cefb"/><rect x="52.0" y="510.8" width="7.4" height="33.3" fill="#ff994d"/><rect x="52.0" y="544.1" width="7.4" height="12.0" fill="#f07b72"/><rect x="52.0" y="556.1" width="7.4" height="1.8" fill="#46bdc6"/><rect x="52.0" y="557.9" width="7.4" height="2.1" fill="#ff6d01"/><rect x="52.0" y="560.0" width="7.4" height="1.8" fill="#34a853"/><rect x="52.0" y="561.8" width="7.4" height="1.5" fill="#4285f4"/><rect x="63.6" y="526.4" width="7.4" height="1.6" fill="#f7b4ae"/><rect x="63.6" y="528.0" width="7.4" height="0.6" fill="#b3cefb"/><rect x="63.6" y="528.6" width="7.4" height="22.4" fill="#ff994d"/><rect x="63.6" y="551.0" width="7.4" height="1.0" fill="#fcd04f"/><rect x="63.6" y="552.0" width="7.4" height="8.0" fill="#f07b72"/><rect x="63.6" y="560.0" width="7.4" height="3.3" fill="#34a853"/><rect x="75.0" y="444.8" width="7.4" height="6.4" fill="#f7b4ae"/><rect x="75.0" y="451.2" width="7.4" height="86.2" fill="#ff994d"/><rect x="75.0" y="537.4" width="7.4" height="2.6" fill="#fcd04f"/><rect x="75.0" y="540.0" width="7.4" height="18.0" fill="#f07b72"/><rect x="75.0" y="558.0" width="7.4" height="2.0" fill="#ff6d01"/><rect x="75.0" y="560.0" width="7.4" height="1.6" fill="#34a853"/><rect x="75.0" y="561.6" width="7.4" height="1.7" fill="#4285f4"/><rect x="86.6" y="495.0" width="7.4" height="2.0" fill="#f7b4ae"/><rect x="86.6" y="497.0" width="7.4" height="50.0" fill="#ff994d"/><rect x="86.6" y="547.0" width="7.4" height="1.6" fill="#fcd04f"/><rect x="86.6" y="548.6" width="7.4" height="11.0" fill="#f07b72"/><rect x="86.6" y="559.6" width="7.4" height="3.7" fill="#34a853"/><rect x="98.0" y="507.0" width="7.4" height="5.6" fill="#f7b4ae"/><rect x="98.0" y="512.6" width="7.4" height="2.4" fill="#b3cefb"/><rect x="98.0" y="515.0" width="7.4" height="31.0" fill="#ff994d"/><rect x="98.0" y="546.0" width="7.4" height="5.0" fill="#fcd04f"/><rect x="98.0" y="551.0" width="7.4" height="10.0" fill="#f07b72"/><rect x="98.0" y="561.0" width="7.4" height="2.3" fill="#ff6d01"/><rect x="109.4" y="485.0" width="7.4" height="6.6" fill="#f7b4ae"/><rect x="109.4" y="491.6" width="7.4" height="2.0" fill="#b3cefb"/><rect x="109.4" y="493.6" width="7.4" height="51.4" fill="#ff994d"/><rect x="109.4" y="545.0" width="7.4" height="2.0" fill="#fcd04f"/><rect x="109.4" y="547.0" width="7.4" height="11.0" fill="#f07b72"/><rect x="109.4" y="558.0" width="7.4" height="3.0" fill="#ff6d01"/><rect x="109.4" y="561.0" width="7.4" height="2.3" fill="#34a853"/><rect x="121.0" y="510.6" width="7.4" height="4.8" fill="#f7b4ae"/><rect x="121.0" y="515.4" width="7.4" height="43.6" fill="#ff994d"/><rect x="121.0" y="559.0" width="7.4" height="1.0" fill="#fcd04f"/><rect x="121.0" y="560.0" width="7.4" height="3.3" fill="#f07b72"/><rect x="132.6" y="539.0" width="7.4" height="0.6" fill="#f7b4ae"/><rect x="132.6" y="539.6" width="7.4" height="19.4" fill="#ff994d"/><rect x="132.6" y="559.0" width="7.4" height="1.0" fill="#fcd04f"/><rect x="132.6" y="560.0" width="7.4" height="3.3" fill="#f07b72"/><rect x="144.0" y="556.0" width="7.4" height="7.3" fill="#ff994d"/><rect x="155.4" y="554.0" width="7.4" height="2.4" fill="#f7b4ae"/><rect x="155.4" y="556.4" width="7.4" height="6.9" fill="#ff994d"/><rect x="167.0" y="535.0" width="7.4" height="4.0" fill="#f7b4ae"/><rect x="167.0" y="539.0" width="7.4" height="1.0" fill="#7ed1d7"/><rect x="167.0" y="540.0" width="7.4" height="15.0" fill="#ff994d"/><rect x="167.0" y="555.0" width="7.4" height="5.4" fill="#f07b72"/><rect x="167.0" y="560.4" width="7.4" height="2.9" fill="#34a853"/><rect x="178.6" y="527.0" width="7.4" height="2.6" fill="#f7b4ae"/><rect x="178.6" y="529.6" width="7.4" height="25.4" fill="#ff994d"/><rect x="178.6" y="555.0" width="7.4" height="4.6" fill="#f07b72"/><rect x="178.6" y="559.6" width="7.4" height="3.7" fill="#ff6d01"/><rect x="189.6" y="516.0" width="7.4" height="5.6" fill="#f7b4ae"/><rect x="189.6" y="521.6" width="7.4" height="30.4" fill="#ff994d"/><rect x="189.6" y="552.0" width="7.4" height="4.4" fill="#fcd04f"/><rect x="189.6" y="556.4" width="7.4" height="6.0" fill="#f07b72"/><rect x="189.6" y="562.4" width="7.4" height="0.9" fill="#34a853"/><rect x="201.0" y="503.0" width="7.4" height="6.4" fill="#f7b4ae"/><rect x="201.0" y="509.4" width="7.4" height="39.2" fill="#ff994d"/><rect x="201.0" y="548.6" width="7.4" height="6.4" fill="#fcd04f"/><rect x="201.0" y="555.0" width="7.4" height="6.6" fill="#f07b72"/><rect x="201.0" y="561.6" width="7.4" height="1.7" fill="#ff6d01"/><rect x="213.0" y="511.4" width="7.4" height="6.0" fill="#f7b4ae"/><rect x="213.0" y="517.4" width="7.4" height="37.0" fill="#ff994d"/><rect x="213.0" y="554.4" width="7.4" height="7.2" fill="#f07b72"/><rect x="213.0" y="561.6" width="7.4" height="1.7" fill="#4285f4"/><rect x="224.1" y="498.0" width="7.4" height="0.5" fill="#f7b4ae"/><rect x="224.1" y="498.5" width="7.4" height="54.2" fill="#ff994d"/><rect x="224.1" y="552.7" width="7.4" height="1.1" fill="#fcd04f"/><rect x="224.1" y="553.8" width="7.4" height="8.6" fill="#f07b72"/><rect x="224.1" y="562.4" width="7.4" height="0.9" fill="#34a853"/><rect x="235.6" y="481.2" width="7.4" height="5.4" fill="#f7b4ae"/><rect x="235.6" y="486.6" width="7.4" height="0.6" fill="#7ed1d7"/><rect x="235.6" y="487.2" width="7.4" height="59.6" fill="#ff994d"/><rect x="235.6" y="546.8" width="7.4" height="2.2" fill="#fcd04f"/><rect x="235.6" y="549.0" width="7.4" height="14.3" fill="#f07b72"/><rect x="247.0" y="496.8" width="7.4" height="6.5" fill="#f7b4ae"/><rect x="247.0" y="503.3" width="7.4" height="49.4" fill="#ff994d"/><rect x="247.0" y="552.7" width="7.4" height="1.1" fill="#fcd04f"/><rect x="247.0" y="553.8" width="7.4" height="7.2" fill="#f07b72"/><rect x="247.0" y="561.0" width="7.4" height="2.3" fill="#34a853"/><rect x="259.0" y="465.0" width="7.4" height="1.7" fill="#f7b4ae"/><rect x="259.0" y="466.7" width="7.4" height="73.6" fill="#ff994d"/><rect x="259.0" y="540.3" width="7.4" height="2.2" fill="#fcd04f"/><rect x="259.0" y="542.5" width="7.4" height="12.3" fill="#f07b72"/><rect x="259.0" y="554.8" width="7.4" height="1.2" fill="#46bdc6"/><rect x="259.0" y="556.0" width="7.4" height="6.0" fill="#ff6d01"/><rect x="259.0" y="562.0" width="7.4" height="1.3" fill="#34a853"/><rect x="270.3" y="478.4" width="7.4" height="4.6" fill="#f7b4ae"/><rect x="270.3" y="483.0" width="7.4" height="59.5" fill="#ff994d"/><rect x="270.3" y="542.5" width="7.4" height="3.0" fill="#fcd04f"/><rect x="270.3" y="545.5" width="7.4" height="13.2" fill="#f07b72"/><rect x="270.3" y="558.7" width="7.4" height="4.6" fill="#34a853"/><rect x="281.7" y="510.9" width="7.4" height="40.1" fill="#ff994d"/><rect x="281.7" y="551.0" width="7.4" height="1.2" fill="#fcd04f"/><rect x="281.7" y="552.2" width="7.4" height="7.6" fill="#f07b72"/><rect x="281.7" y="559.8" width="7.4" height="0.9" fill="#34a853"/><rect x="281.7" y="560.7" width="7.4" height="2.6" fill="#4285f4"/><rect x="293.0" y="509.3" width="7.4" height="1.1" fill="#f7b4ae"/><rect x="293.0" y="510.4" width="7.4" height="40.8" fill="#ff994d"/><rect x="293.0" y="551.2" width="7.4" height="1.5" fill="#fcd04f"/><rect x="293.0" y="552.7" width="7.4" height="8.6" fill="#f07b72"/><rect x="293.0" y="561.3" width="7.4" height="2.0" fill="#34a853"/><rect x="304.5" y="531.7" width="7.4" height="0.3" fill="#7ed1d7"/><rect x="304.5" y="532.0" width="7.4" height="20.7" fill="#ff994d"/><rect x="304.5" y="552.7" width="7.4" height="9.3" fill="#f07b72"/><rect x="304.5" y="562.0" width="7.4" height="1.3" fill="#ff6d01"/><rect x="316.0" y="496.0" width="7.4" height="14.7" fill="#f7b4ae"/><rect x="316.0" y="510.7" width="7.4" height="1.6" fill="#b3cefb"/><rect x="316.0" y="512.3" width="7.4" height="37.7" fill="#ff994d"/><rect x="316.0" y="550.0" width="7.4" height="1.7" fill="#fcd04f"/><rect x="316.0" y="551.7" width="7.4" height="10.0" fill="#f07b72"/><rect x="316.0" y="561.7" width="7.4" height="1.6" fill="#34a853"/><rect x="327.7" y="515.7" width="7.4" height="2.6" fill="#f7b4ae"/><rect x="327.7" y="518.3" width="7.4" height="34.4" fill="#ff994d"/><rect x="327.7" y="552.7" width="7.4" height="1.6" fill="#fcd04f"/><rect x="327.7" y="554.3" width="7.4" height="9.0" fill="#f07b72"/><rect x="339.0" y="386.7" width="7.4" height="3.3" fill="#f7b4ae"/><rect x="339.0" y="390.0" width="7.4" height="6.0" fill="#b3cefb"/><rect x="339.0" y="396.0" width="7.4" height="138.0" fill="#ff994d"/><rect x="339.0" y="534.0" width="7.4" height="1.7" fill="#fcd04f"/><rect x="339.0" y="535.7" width="7.4" height="21.0" fill="#f07b72"/><rect x="339.0" y="556.7" width="7.4" height="0.6" fill="#46bdc6"/><rect x="339.0" y="557.3" width="7.4" height="2.7" fill="#34a853"/><rect x="339.0" y="560.0" width="7.4" height="3.3" fill="#4285f4"/><rect x="350.0" y="409.3" width="7.4" height="3.4" fill="#f7b4ae"/><rect x="350.0" y="412.7" width="7.4" height="117.3" fill="#ff994d"/><rect x="350.0" y="530.0" width="7.4" height="12.3" fill="#fcd04f"/><rect x="350.0" y="542.3" width="7.4" height="19.4" fill="#f07b72"/><rect x="350.0" y="561.7" width="7.4" height="1.6" fill="#4285f4"/><rect x="362.0" y="403.3" width="7.4" height="4.4" fill="#f7b4ae"/><rect x="362.0" y="407.7" width="7.4" height="116.6" fill="#ff994d"/><rect x="362.0" y="524.3" width="7.4" height="11.4" fill="#fcd04f"/><rect x="362.0" y="535.7" width="7.4" height="20.3" fill="#f07b72"/><rect x="362.0" y="556.0" width="7.4" height="1.3" fill="#ff6d01"/><rect x="362.0" y="557.3" width="7.4" height="6.0" fill="#34a853"/><rect x="373.3" y="472.7" width="7.4" height="6.6" fill="#f7b4ae"/><rect x="373.3" y="479.3" width="7.4" height="58.4" fill="#ff994d"/><rect x="373.3" y="537.7" width="7.4" height="11.6" fill="#fcd04f"/><rect x="373.3" y="549.3" width="7.4" height="9.0" fill="#f07b72"/><rect x="373.3" y="558.3" width="7.4" height="1.7" fill="#ff6d01"/><rect x="373.3" y="560.0" width="7.4" height="3.3" fill="#34a853"/><rect x="385.0" y="471.0" width="7.4" height="2.3" fill="#f7b4ae"/><rect x="385.0" y="473.3" width="7.4" height="74.4" fill="#ff994d"/><rect x="385.0" y="547.7" width="7.4" height="1.6" fill="#fcd04f"/><rect x="385.0" y="549.3" width="7.4" height="9.0" fill="#f07b72"/><rect x="385.0" y="558.3" width="7.4" height="1.7" fill="#ff6d01"/><rect x="385.0" y="560.0" width="7.4" height="3.3" fill="#34a853"/><rect x="396.0" y="548.3" width="7.4" height="11.7" fill="#ff994d"/><rect x="396.0" y="560.0" width="7.4" height="2.0" fill="#f07b72"/><rect x="396.0" y="562.0" width="7.4" height="1.3" fill="#b39ddb"/><rect x="422" y="379.4" width="6.8" height="6.8" fill="#fde49b"/><text x="434" y="385.5" font-size="7.4" fill="#3c3c3c">Quebec</text><rect x="422" y="392.9" width="6.8" height="6.8" fill="#f7b4ae"/><text x="434" y="398.9" font-size="7.4" fill="#3c3c3c">Pacific</text><rect x="422" y="406.3" width="6.8" height="6.8" fill="#b3cefb"/><text x="434" y="412.4" font-size="7.4" fill="#3c3c3c">Ontario</text><rect x="422" y="419.8" width="6.8" height="6.8" fill="#7ed1d7"/><text x="434" y="425.8" font-size="7.4" fill="#3c3c3c">Nova Scotia</text><rect x="422" y="433.2" width="6.8" height="6.8" fill="#ff994d"/><text x="434" y="439.3" font-size="7.4" fill="#3c3c3c">New England</text><rect x="422" y="446.7" width="6.8" height="6.8" fill="#71c287"/><text x="434" y="452.8" font-size="7.4" fill="#3c3c3c">New Brunswick</text><rect x="422" y="460.1" width="6.8" height="6.8" fill="#fcd04f"/><text x="434" y="466.2" font-size="7.4" fill="#3c3c3c">Mountain</text><rect x="422" y="473.6" width="6.8" height="6.8" fill="#f07b72"/><text x="434" y="479.6" font-size="7.4" fill="#3c3c3c">Mid-Atlantic</text><rect x="422" y="487.0" width="6.8" height="6.8" fill="#7baaf7"/><text x="434" y="493.1" font-size="7.4" fill="#3c3c3c">Manitoba</text><rect x="422" y="500.5" width="6.8" height="6.8" fill="#46bdc6"/><text x="434" y="506.6" font-size="7.4" fill="#3c3c3c">Kansas</text><rect x="422" y="513.9" width="6.8" height="6.8" fill="#ff6d01"/><text x="434" y="520.0" font-size="7.4" fill="#3c3c3c">East South Central</text><rect x="422" y="527.4" width="6.8" height="6.8" fill="#34a853"/><text x="434" y="533.5" font-size="7.4" fill="#3c3c3c">East North Central</text><rect x="422" y="540.8" width="6.8" height="6.8" fill="#fbbc04"/><text x="434" y="546.9" font-size="7.4" fill="#3c3c3c">British Columbia</text><rect x="422" y="554.2" width="6.8" height="6.8" fill="#ea4335"/><text x="434" y="560.4" font-size="7.4" fill="#3c3c3c">Alberta</text><rect x="422" y="567.7" width="6.8" height="6.8" fill="#4285f4"/></g></svg>
<!-- table 2 -->
<div class="a" style="left:513px;top:366.3px;width:400px;height:16.5px;background:#6aa84f"></div>
<div class="a" style="left:515px;top:366.5px;font-size:11.4px;line-height:16.5px;font-weight:bold;color:#fff;transform:scaleY(1.08);transform-origin:0 8px">Sales By State</div>
<div class="a" style="left:512.5px;top:382.5px;width:1px;height:190px;background:#6aa84f"></div>
<div class="a sy" style="left:545.7px;top:385px;font-size:8px;line-height:12px;font-weight:bold;color:#1a1a1a">Region</div>
<div class="a sy" style="left:622.8px;top:385px;font-size:8px;line-height:12px;font-weight:bold;color:#1a1a1a">Division</div>
<div class="a sy" style="left:698.5px;top:385px;font-size:8px;line-height:12px;font-weight:bold;color:#1a1a1a">State</div>
<div class="a sy" style="left:770px;top:385px;font-size:8px;line-height:12px;font-weight:bold;color:#1a1a1a">No. Of Sales</div>
<div class="a sy" style="left:835px;top:385px;font-size:8px;line-height:12px;font-weight:bold;color:#1a1a1a">Sales Value</div>
<svg class="a" style="left:0;top:0" width="900" height="600"><g fill="#7dba7d"><path d="M610.5 387.6h6.8l-3.4 3.6z"/><path d="M686 387.6h6.8l-3.4 3.6z"/><path d="M757.5 387.6h6.8l-3.4 3.6z"/><path d="M822 387.6h6.8l-3.4 3.6z"/><path d="M895 387.6h6.8l-3.4 3.6z"/></g></svg>
<div class="c" style="left:515px;top:397.8px">Northeast</div><div class="c" style="left:622.8px;top:397.8px">New England</div><div class="c" style="left:698.5px;top:397.8px">VT</div><div class="c" style="left:770px;top:397.8px;width:59px;text-align:center">1751</div><div class="c" style="left:830px;top:397.8px;width:72.3px;text-align:right">$8,274,854.51</div><div class="c" style="left:515px;top:410.7px">Northeast</div><div class="c" style="left:622.8px;top:410.7px">New England</div><div class="c" style="left:698.5px;top:410.7px">NH</div><div class="c" style="left:770px;top:410.7px;width:59px;text-align:center">652</div><div class="c" style="left:830px;top:410.7px;width:72.3px;text-align:right">$2,923,550.81</div><div class="c" style="left:515px;top:423.6px">Northeast</div><div class="c" style="left:622.8px;top:423.6px">New England</div><div class="c" style="left:698.5px;top:423.6px">ME</div><div class="c" style="left:770px;top:423.6px;width:59px;text-align:center">308</div><div class="c" style="left:830px;top:423.6px;width:72.3px;text-align:right">$1,364,500.06</div><div class="c" style="left:515px;top:436.5px">South</div><div class="c" style="left:622.8px;top:436.5px">East South Central</div><div class="c" style="left:698.5px;top:436.5px">TN</div><div class="c" style="left:770px;top:436.5px;width:59px;text-align:center">70</div><div class="c" style="left:830px;top:436.5px;width:72.3px;text-align:right">$251,522.34</div><div class="c" style="left:515px;top:449.4px">West</div><div class="c" style="left:622.8px;top:449.4px">Mountain</div><div class="c" style="left:698.5px;top:449.4px">UT</div><div class="c" style="left:770px;top:449.4px;width:59px;text-align:center">42</div><div class="c" style="left:830px;top:449.4px;width:72.3px;text-align:right">$145,813.71</div><div class="c" style="left:515px;top:462.3px">Northeast</div><div class="c" style="left:622.8px;top:462.3px">Mid-Atlantic</div><div class="c" style="left:698.5px;top:462.3px">NY</div><div class="c" style="left:770px;top:462.3px;width:59px;text-align:center">774</div><div class="c" style="left:830px;top:462.3px;width:72.3px;text-align:right">$2,626,162.74</div><div class="c" style="left:515px;top:475.2px">Northeast</div><div class="c" style="left:622.8px;top:475.2px">New England</div><div class="c" style="left:698.5px;top:475.2px">MA</div><div class="c" style="left:770px;top:475.2px;width:59px;text-align:center">852</div><div class="c" style="left:830px;top:475.2px;width:72.3px;text-align:right">$2,787,725.15</div><div class="c" style="left:515px;top:488.1px">-</div><div class="c" style="left:622.8px;top:488.1px">-</div><div class="c" style="left:698.5px;top:488.1px">CPU/NH</div><div class="c" style="left:770px;top:488.1px;width:59px;text-align:center">1</div><div class="c" style="left:830px;top:488.1px;width:72.3px;text-align:right">$2,893.80</div><div class="c" style="left:515px;top:501.0px">West</div><div class="c" style="left:622.8px;top:501.0px">Mountain</div><div class="c" style="left:698.5px;top:501.0px">MT</div><div class="c" style="left:770px;top:501.0px;width:59px;text-align:center">34</div><div class="c" style="left:830px;top:501.0px;width:72.3px;text-align:right">$97,795.40</div><div class="c" style="left:515px;top:513.9px">West</div><div class="c" style="left:622.8px;top:513.9px">Mountain</div><div class="c" style="left:698.5px;top:513.9px">CO</div><div class="c" style="left:770px;top:513.9px;width:59px;text-align:center">110</div><div class="c" style="left:830px;top:513.9px;width:72.3px;text-align:right">$310,695.84</div><div class="c" style="left:515px;top:526.8px">Northeast</div><div class="c" style="left:622.8px;top:526.8px">New England</div><div class="c" style="left:698.5px;top:526.8px">CT</div><div class="c" style="left:770px;top:526.8px;width:59px;text-align:center">334</div><div class="c" style="left:830px;top:526.8px;width:72.3px;text-align:right">$927,980.24</div><div class="c" style="left:515px;top:539.7px">West</div><div class="c" style="left:622.8px;top:539.7px">Mountain</div><div class="c" style="left:698.5px;top:539.7px">ID</div><div class="c" style="left:770px;top:539.7px;width:59px;text-align:center">42</div><div class="c" style="left:830px;top:539.7px;width:72.3px;text-align:right">$115,394.40</div><div class="c" style="left:515px;top:552.6px">Northeast</div><div class="c" style="left:622.8px;top:552.6px">New England</div><div class="c" style="left:698.5px;top:552.6px">RI</div><div class="c" style="left:770px;top:552.6px;width:59px;text-align:center">91</div><div class="c" style="left:830px;top:552.6px;width:72.3px;text-align:right">$249,189.47</div><div class="c" style="left:515px;top:565.5px">South</div><div class="c" style="left:622.8px;top:565.5px">South Atlantic</div><div class="c" style="left:698.5px;top:565.5px">VA</div><div class="c" style="left:770px;top:565.5px;width:59px;text-align:center">174</div><div class="c" style="left:830px;top:565.5px;width:72.3px;text-align:right">$465,456.78</div>
<!-- scrollbar + bottom -->
<div class="a" style="left:0;top:568.7px;width:900px;height:7px;background:#fff;border-top:1px solid #ebebeb"></div>
<div class="a" style="left:-5px;top:570px;width:80.5px;height:5px;background:#dadce0;border-radius:3px"></div>
<div class="a" style="left:0;top:575.5px;width:900px;height:25px;background:#f1f3f4;border-top:1px solid #e8eaed"></div>
<svg class="a" style="left:2px;top:584.5px" width="8" height="8" viewBox="0 0 8 8"><path d="M0 .8h8M0 2.7h8M0 4.6h8M0 6.5h8" stroke="#5f6368" stroke-width="1.2"/></svg>
<div class="a" style="left:24px;top:575.5px;width:76px;height:25px;background:#fff;box-shadow:0 1px 2px rgba(0,0,0,.15)"></div>
<div class="tab" style="left:34.4px;color:#188038">Dashboard</div>
<div class="dd" style="left:85.3px;top:587px;border-top-color:#188038"></div>
<div class="tab" style="left:110px">Notes</div><div class="dd" style="left:141px;top:587px"></div><div class="sep" style="left:154.8px"></div>
<div class="tab" style="left:165.5px">Refunds</div><div class="dd" style="left:205.5px;top:587px"></div><div class="sep" style="left:220px"></div>
<svg class="a" style="left:230px;top:582.5px" width="10" height="10" viewBox="0 0 10 10"><path d="M0 0h10v8H2L0 10z" fill="#5f6368"/><path d="M4.6 2h1.4v4.5H4.8V3.2h-.8z" fill="#fff"/></svg>
<div class="tab" style="left:244.5px">P&amp;L Reports</div><div class="dd" style="left:301px;top:587px"></div><div class="sep" style="left:316px"></div>
<div class="tab" style="left:326px">DataSource</div><div class="dd" style="left:381px;top:587px"></div><div class="sep" style="left:395.7px"></div>
<div class="tab" style="left:405.7px">H-Ticket</div><div class="dd" style="left:446.5px;top:587px"></div><div class="sep" style="left:462.5px"></div>
<svg class="a" style="left:472px;top:582.5px" width="8" height="10" viewBox="0 0 8 10"><path d="M2 4.2V3a2 2 0 0 1 4 0v1.2" fill="none" stroke="#5f6368" stroke-width="1.1"/><rect x="0.6" y="4.2" width="6.8" height="5.3" rx=".6" fill="#5f6368"/></svg>
<div class="tab" style="left:485px">Consolidated File</div><div class="dd" style="left:563.8px;top:587px"></div><div class="sep" style="left:578.7px"></div>
<div class="tab" style="left:588px">PCK</div><div class="dd" style="left:612px;top:587px"></div><div class="sep" style="left:627px"></div>
<div class="tab" style="left:636px">FA</div><div class="dd" style="left:653.3px;top:587px"></div><div class="sep" style="left:667.5px"></div>
<div class="tab" style="left:678px">PLANS</div><div class="dd" style="left:711.8px;top:587px"></div><div class="sep" style="left:726px"></div>
<div class="tab" style="left:736px;width:5px;overflow:hidden">A</div>
<div class="a" style="left:741px;top:576px;width:2px;height:24px;background:linear-gradient(90deg,#d0d0d0,#f1f3f4)"></div>
<div class="a" style="left:743px;top:576px;width:160px;height:24px;background:#f1f3f4"></div>
<svg class="a" style="left:750px;top:584px" width="30" height="9" viewBox="0 0 30 9"><path d="M5 1L1.5 4.5 5 8z" fill="#c0c0c0"/><path d="M21 1l3.8 3.5L21 8z" fill="#444"/></svg>
</body></html>
